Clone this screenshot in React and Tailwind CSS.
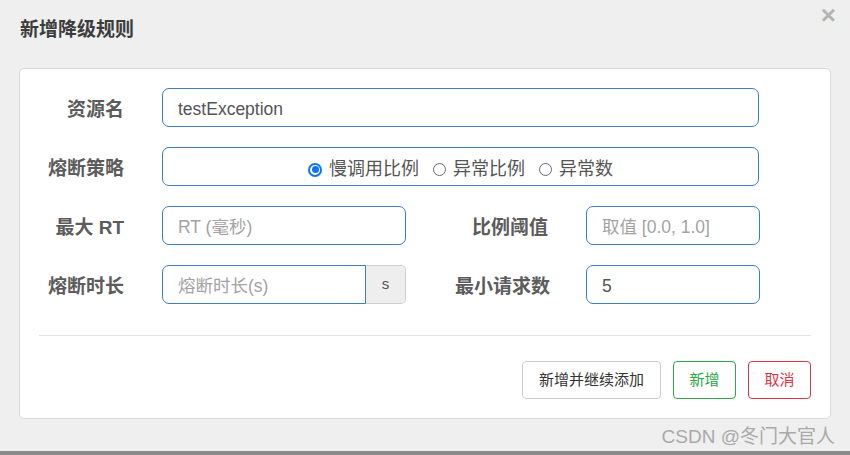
import React from "react";

const font = "font-['Liberation_Sans','Noto_Sans_CJK_SC',sans-serif]";

function Label({ children, className = "" }) {
  return (
    <div className={`pt-[5px] text-right text-[19px] font-bold text-[#5c5c5c] ${className}`}>
      {children}
    </div>
  );
}

function Input({ value, placeholder, className = "" }) {
  return (
    <div
      className={`flex h-[39px] items-center rounded-[7px] border border-[#3d7dbd] bg-white px-[15px] pt-[3px] text-[17.5px] ${className}`}
    >
      {value ? (
        <span className="text-[#555]">{value}</span>
      ) : (
        <span className="text-[#a3a3a3]">{placeholder}</span>
      )}
    </div>
  );
}

function Radio({ checked, label }) {
  return (
    <label className="flex items-center gap-[7px]">
      {checked ? (
        <span className="flex h-[14px] w-[14px] items-center justify-center rounded-full bg-[#0b75ef]">
          <span className="flex h-[10px] w-[10px] items-center justify-center rounded-full bg-white">
            <span className="h-[7px] w-[7px] rounded-full bg-[#0b75ef]" />
          </span>
        </span>
      ) : (
        <span className="h-[13px] w-[13px] rounded-full border border-[#6b6b6b] bg-white" />
      )}
      <span className="text-[18px] text-[#555]">{label}</span>
    </label>
  );
}

export default function App() {
  return (
    <div className={`flex h-[455px] w-[850px] flex-col bg-[#efefef] ${font}`}>
      {/* Header */}
      <div className="flex h-[68px] items-start justify-between pl-[20px] pr-[14px]">
        <h1 className="mt-[16px] text-[19px] font-bold text-[#3c3c3c]">新增降级规则</h1>
        <span className="mt-[2px] text-[26px] font-bold leading-none text-[#b4b4b4]">×</span>
      </div>

      {/* Form card */}
      <div className="ml-[19px] flex h-[351px] w-[812px] flex-col rounded-[5px] border border-[#d9d9d9] bg-white px-[19px] pt-[19px]">
        <div className="flex flex-col gap-[20px]">
          <div className="flex items-center">
            <Label className="w-[85px]">资源名</Label>
            <Input className="ml-[38px] w-[597px]" value="testException" />
          </div>

          <div className="flex items-center">
            <Label className="w-[85px]">熔断策略</Label>
            <div className="ml-[38px] flex h-[39px] w-[597px] items-center justify-center gap-[14px] rounded-[7px] border border-[#3d7dbd] pt-[7px]">
              <Radio checked label="慢调用比例" />
              <Radio label="异常比例" />
              <Radio label="异常数" />
            </div>
          </div>

          <div className="flex items-center">
            <Label className="w-[85px]">最大 RT</Label>
            <Input className="ml-[38px] w-[244px]" placeholder="RT (毫秒)" />
            <Label className="w-[142px]">比例阈值</Label>
            <Input className="ml-[38px] w-[174px]" placeholder="取值 [0.0, 1.0]" />
          </div>

          <div className="flex items-center">
            <Label className="w-[85px]">熔断时长</Label>
            <div className="ml-[38px] flex w-[244px]">
              <div className="flex h-[39px] flex-1 items-center rounded-l-[7px] border border-[#3d7dbd] px-[15px] pt-[3px] text-[17.5px] text-[#a3a3a3]">
                熔断时长(s)
              </div>
              <div className="flex h-[39px] w-[40px] items-center justify-center rounded-r-[5px] border border-l-0 border-[#cfcfcf] bg-[#eeeeee] text-[15px] text-[#555]">
                s
              </div>
            </div>
            <Label className="w-[144px]">最小请求数</Label>
            <Input className="ml-[36px] w-[174px]" value="5" />
          </div>
        </div>

        <hr className="mt-[31px] border-t border-[#e3e3e3]" />

        <div className="mt-[25px] flex justify-end gap-[12px] text-[15px]">
          <button className="h-[38px] rounded-[4px] border border-[#cccccc] bg-white px-[16px] text-[#333]">
            新增并继续添加
          </button>
          <button className="h-[38px] w-[63px] rounded-[4px] border border-[#2ea84a] bg-white text-[#28a745]">
            新增
          </button>
          <button className="h-[38px] w-[63px] rounded-[4px] border border-[#dc3545] bg-white text-[#dc3545]">
            取消
          </button>
        </div>
      </div>

      {/* Watermark */}
      <div className="flex flex-1 items-center justify-end pr-[15px] pt-[4px]">
        <span className="text-[19px] text-[#a9a9a9]">CSDN @冬门大官人</span>
      </div>
      <div className="h-[4px] bg-[#8a8a8a]" />
    </div>
  );
}
